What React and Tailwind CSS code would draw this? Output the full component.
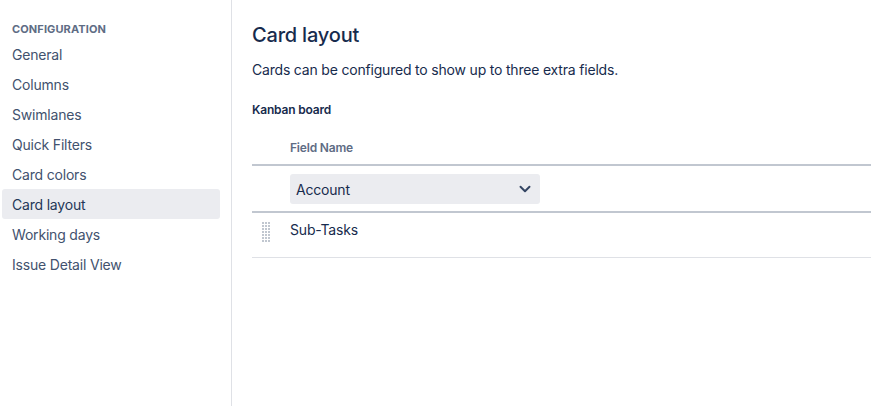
import { ChevronDown } from "lucide-react";

const items = [
  "General",
  "Columns",
  "Swimlanes",
  "Quick Filters",
  "Card colors",
  "Card layout",
  "Working days",
  "Issue Detail View",
];

const DragHandle = () => (
  <svg width="9" height="21" viewBox="0 0 9 21" className="block">
    {[0, 1, 2, 3, 4, 5, 6].map((r) =>
      [0, 1, 2].map((c) => (
        <rect key={`${r}-${c}`} x={c * 3} y={r * 3} width="2" height="2" fill="#c1c7d0" />
      ))
    )}
  </svg>
);

export default function App() {
  return (
    <div
      className="flex w-[871px] h-[406px] bg-white text-[#172b4d] overflow-hidden tracking-[-0.012em]"
      style={{ fontFamily: "Inter, 'Noto Sans', sans-serif" }}
    >
      <aside className="w-[232px] shrink-0 border-r border-[#dfe1e6] pl-[2px] pr-[11px] pt-[21px]">
        <div className="h-[18px] px-[10px] text-[11px] font-bold uppercase tracking-[0.01em] text-[#5e6c84] leading-[16px]">
          Configuration
        </div>
        <nav className="flex flex-col">
          {items.map((item) => (
            <div
              key={item}
              className={`h-[30px] flex items-center px-[10px] rounded-[3px] text-[14px] ${
                item === "Card layout" ? "bg-[#ebecf0] text-[#253858]" : "text-[#42526e]"
              }`}
            >
              {item}
            </div>
          ))}
        </nav>
      </aside>

      <main className="flex-1 pl-[20px] pt-[23px]">
        <h1 className="text-[20px] leading-[24px] font-medium">Card layout</h1>
        <p className="mt-[13px] text-[14px] leading-[20px]">
          Cards can be configured to show up to three extra fields.
        </p>
        <h2 className="mt-[22px] text-[12px] leading-[16px] font-semibold">Kanban board</h2>

        <div className="mt-[21px]">
          <div className="flex items-center h-[27px] border-b-2 border-[#c1c7d0]">
            <div className="w-[38px]" />
            <div className="text-[12px] font-semibold text-[#5e6c84] pb-[8px]">Field Name</div>
          </div>
          <div className="flex items-start pt-[8px] h-[47px] border-b-2 border-[#c1c7d0]">
            <div className="w-[38px]" />
            <div className="w-[250px] h-[30px] bg-[#ebecf0] rounded-[3px] flex items-center justify-between pl-[6px] pr-[6px] text-[14px]">
              <span>Account</span>
              <ChevronDown size={18} strokeWidth={2.6} className="text-[#344563]" />
            </div>
          </div>
          <div className="flex items-center h-[45px] border-b border-[#dfe1e6]">
            <div className="w-[38px] pl-[10px] pb-[6px]">
              <DragHandle />
            </div>
            <div className="text-[14px] pb-[11px]">Sub-Tasks</div>
          </div>
        </div>
      </main>
    </div>
  );
}
